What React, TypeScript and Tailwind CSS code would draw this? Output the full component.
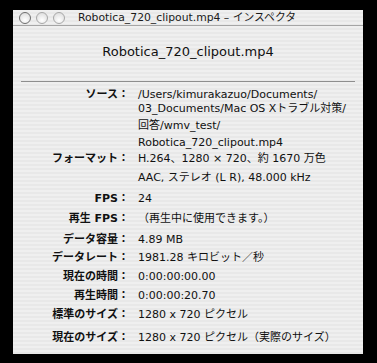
const stripes =
  "bg-[repeating-linear-gradient(180deg,#efefef_0px,#efefef_2px,#e8e8e8_2px,#e8e8e8_4px)]";

type Line = { label?: string; value: string; h: number };

const lines: Line[] = [
  { label: "ソース：", value: "/Users/kimurakazuo/Documents/", h: 14 },
  { value: "03_Documents/Mac OS Xトラブル対策/", h: 17 },
  { value: "回答/wmv_test/", h: 17 },
  { value: "Robotica_720_clipout.mp4", h: 16 },
  { label: "フォーマット：", value: "H.264、1280 × 720、約 1670 万色", h: 19 },
  { value: "AAC, ステレオ (L R), 48.000 kHz", h: 21 },
  { label: "FPS：", value: "24", h: 20 },
  { label: "再生 FPS：", value: "（再生中に使用できます。）", h: 21 },
  { label: "データ容量：", value: "4.89 MB", h: 18 },
  { label: "データレート：", value: "1981.28 キロビット／秒", h: 19 },
  { label: "現在の時間：", value: "0:00:00:00.00", h: 19 },
  { label: "再生時間：", value: "0:00:00:20.70", h: 19 },
  { label: "標準のサイズ：", value: "1280 x 720 ピクセル", h: 23 },
  { label: "現在のサイズ：", value: "1280 x 720 ピクセル（実際のサイズ）", h: 14 },
];

function Light({ dark }: { dark?: boolean }) {
  return (
    <div
      className={`w-[12px] h-[12px] rounded-full border bg-[radial-gradient(circle_at_50%_70%,#ffffff,#d8d8d8)] ${
        dark ? "border-[#6e6e6e]" : "border-[#a8a8a8]"
      }`}
    />
  );
}

export default function App() {
  return (
    <div
      className="w-[377px] h-[363px] bg-black pl-[13px] pt-[10px] text-[#111]"
      style={{ fontFamily: '"DejaVu Sans", "Noto Sans CJK JP", sans-serif' }}
    >
      <div className={`w-[350px] h-[344px] flex flex-col ${stripes}`}>
        {/* title bar */}
        <div className="h-[16px] flex items-center border-b border-[#a5a5a5] pl-[6px]">
          <div className="flex gap-[5px]">
            <Light dark />
            <Light />
            <Light />
          </div>
          <div className="ml-[13px] text-[10.8px] leading-[14px] text-[#1a1a1a]">
            Robotica_720_clipout.mp4 – インスペクタ
          </div>
        </div>

        <div className="mt-[18px] text-center text-[13px] leading-[16px]">
          Robotica_720_clipout.mp4
        </div>

        <div className="mt-[21px] mx-[8px] h-px bg-[#8e8e8e]" />

        <div className="mt-[6px] flex flex-col text-[11px] leading-[14px]">
          {lines.map((l, i) => (
            <div key={i} className="flex" style={{ height: l.h }}>
              <div className="w-[116px] text-right font-bold">{l.label ?? ""}</div>
              <div className="ml-[9px] whitespace-nowrap">{l.value}</div>
            </div>
          ))}
        </div>
      </div>
    </div>
  );
}
